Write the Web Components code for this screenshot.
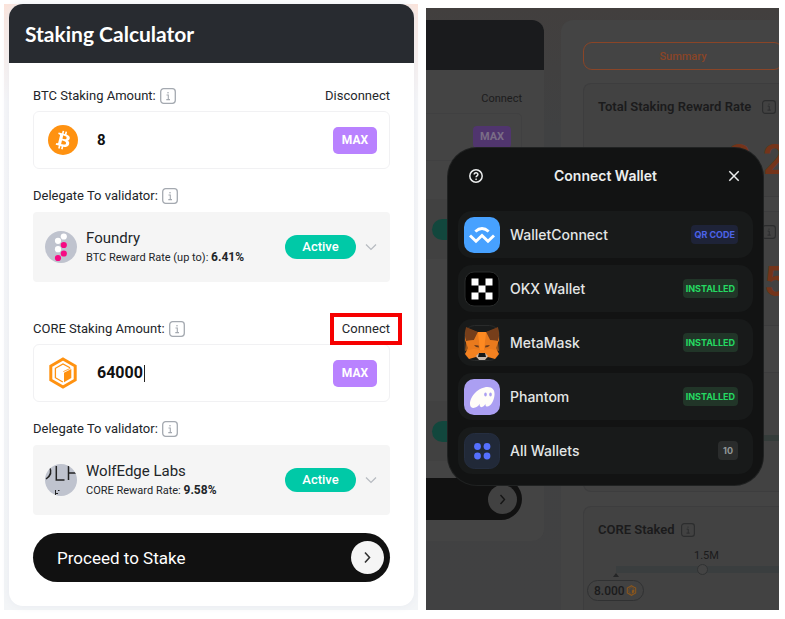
<!DOCTYPE html>
<html lang="en">
<head>
<meta charset="utf-8">
<title>Staking Calculator</title>
<style>
  body { margin: 0; background: #fff; font-family: Roboto, "Liberation Sans", sans-serif; color: #222529; }
</style>
</head>
<body>
<staking-page></staking-page>
<script>
const sheet = `*{box-sizing:border-box}button{font:inherit;border:0;padding:0;margin:0;background:none;color:inherit;cursor:pointer;text-align:left}svg{display:block}`;
const define = (name, html) => {
  customElements.define(name, class extends HTMLElement {
    connectedCallback() {
      if (this.shadowRoot) return;
      const t = document.createElement('template');
      t.innerHTML = `<style>${sheet}</style>` + html(this);
      this.attachShadow({ mode: 'open' }).append(t.content.cloneNode(true));
    }
  });
};

const bitcoin = `<svg width="30" height="30" viewBox="0 0 32 32"><circle cx="16" cy="16" r="16" fill="#ff9211"/><path fill="#fff" d="M23.2 14c.3-2.100-1.300-3.200-3.500-4l.7-2.800-1.700-.4-.7 2.700-1.400-.3.700-2.800-1.700-.4-.7 2.800-3.500-.9-.5 1.800s1.300.3 1.200.3c.7.2.8.6.8 1l-2 8c-.1.200-.3.500-.8.400l-1.200-.3-.8 1.900 3.400.9-.7 2.900 1.700.4.700-2.800 1.400.4-.7 2.800 1.700.4.7-2.900c3 .6 5.200.3 6.100-2.300.7-2.100 0-3.400-1.600-4.200 1.200-.2 2.100-1 2.400-2.600zm-4 5.600c-.5 2.100-4.100 1-5.200.7l.9-3.800c1.200.3 4.900.9 4.300 3.100zm.6-5.600c-.5 1.900-3.500.9-4.400.7l.8-3.400c1 .2 4.100.7 3.600 2.700z"/></svg>`;
const core = (s, c) => `<svg width="${s}" height="${s}" viewBox="0 0 32 32" fill="none" stroke="${c}"><path d="M16 2 28.200 9V23L16 30 3.800 23V9z" stroke-width="3"/><path d="M23 10.800 16 6.900 8.400 11.300V20.700L15.800 25" stroke-width="1.300"/><path d="M24.300 12V20.900L17 25.200V15.700z" fill="${c}" stroke="none"/><path d="M23.500 11.300 16.300 14.600" stroke-width=".8"/></svg>`;
const foundry = `<svg width="32" height="32" viewBox="0 0 32 32"><circle cx="16" cy="16" r="16" fill="#bfc3ce"/><g fill="#fff"><circle cx="18.800" cy="5.500" r="3.100"/><circle cx="13" cy="9.800" r="3.100"/><circle cx="13" cy="18.200" r="3.100"/></g><g fill="#f60a83"><circle cx="18.800" cy="14" r="3.100"/><circle cx="18.800" cy="22.500" r="3.100"/><circle cx="13" cy="27" r="3.100"/></g></svg>`;
const wolf = `<svg width="32" height="32" viewBox="0 0 32 32"><clipPath id="r"><circle cx="16" cy="16" r="16"/></clipPath><g clip-path="url(#r)"><path fill="#bfc3ce" d="M0 0h32v32H0z"/><g fill="none" stroke="#222" stroke-width="1.500"><path d="M4 2Q8.500 10 1 15M11.300 2V16H19.500M23.500 2V16M23.500 9H32"/><path d="M10.500 26V31M10.500 29.500H13M13 26.500H14.500" stroke-width="1"/></g></g></svg>`;

define('info-icon', () => `<style>:host{display:block;color:#a4a9b0}:host([small]) svg{width:14px;height:14px}</style>
<svg width="16" height="16" viewBox="0 0 16 16" fill="none" stroke="currentColor"><rect x=".7" y=".7" width="14.600" height="14.600" rx="3" stroke-width="1.300"/><path d="M6.500 7H8.300V11.600M6.300 11.600H10" stroke-width="1.100"/><circle cx="8" cy="4.700" r=".8" fill="currentColor" stroke="none"/></svg>`);

define('field-label', () => `<style>:host{display:flex;align-items:center;gap:4px;height:20px;font-size:13px;line-height:20px}
slot[name=action]{display:block;margin-left:auto}.l{white-space:nowrap}</style><span class="l"><slot></slot></span><info-icon></info-icon><slot name="action"></slot>`);

define('link-button', () => `<style>:host{display:block;margin-left:auto}button{display:block;font-size:13px;line-height:20px;color:#25282c}
:host([marked]) button{border:4px solid #f60000;padding:2px 8px;margin:0 -12px}</style><button type="button"><slot></slot></button>`);

define('amount-field', el => `<style>:host{display:flex;align-items:center;height:58px;border:1px solid #f1f1f3;border-radius:6px;padding:0 12px 0 13px;background:#fff}
.ic{width:32px;display:flex;justify-content:center}input{font:700 15px/24px Roboto,sans-serif;color:#111;border:0;outline:0;background:none;padding:0;margin-left:18px;flex:1;min-width:0;width:0}
.v{flex:1;min-width:0;display:flex;align-items:center}
.caret input{flex:none;width:47px;font-size:16px}.bar{width:1px;height:17px;background:#222}
button{height:27px;width:44px;border-radius:5px;background:#b982ff;color:#fff;font-size:12px;font-weight:700;text-align:center}</style>
<span class="ic">${el.getAttribute('coin') === 'btc' ? bitcoin : core(32, '#ff9211')}</span>
<span class="v ${el.hasAttribute('caret') ? 'caret' : ''}"><input type="text" aria-label="${el.getAttribute('label')}" value="${el.getAttribute('value')}">${el.hasAttribute('caret') ? '<span class="bar"></span>' : ''}</span>
<button type="button">MAX</button>`);

define('validator-row', el => `<style>:host{display:block}button{display:flex;width:100%;height:70px;align-items:center;padding:0 13px 0 12px;background:#f5f5f5;border-radius:4px}
.t{margin-left:9px;flex:1;min-width:0;white-space:nowrap}.n{display:block;font-size:15px;line-height:20px}.r{display:block;font-size:11px;line-height:18px}b{font-size:12px;font-weight:700}
.a{width:71px;height:24px;border-radius:12px;background:#00c9a7;color:#fff;font-size:13px;font-weight:500;line-height:24px;text-align:center;margin-right:9px}</style>
<button type="button">${el.getAttribute('icon') === 'foundry' ? foundry : wolf}<span class="t"><span class="n"><slot></slot></span><span class="r">${el.getAttribute('rate')}: <b>${el.getAttribute('value')}</b></span></span><span class="a">Active</span>
<svg width="12" height="8" viewBox="0 0 12 8" fill="none" stroke="#b6bac0" stroke-width="1.200"><path d="M1 1.500 6 6.500 11 1.500"/></svg></button>`);

define('staking-card', () => `<style>:host{display:block;background:#fff;border-radius:14px;overflow:hidden;box-shadow:0 0 8px #e8ebf0}
header{background:#282b30;height:59px;padding:0 16px;display:flex;align-items:center}h1{margin:0;color:#fff;font:700 21px/24px Lato,sans-serif}
main{padding:23px 24px 24px}amount-field{margin:5px 0 17px}validator-row{margin-top:6px}.next{margin-top:37px}
.go{display:flex;align-items:center;justify-content:space-between;width:100%;height:49px;margin-top:18px;padding:0 6px 0 24px;border-radius:25px;background:#111;color:#fff;font-size:17px}</style>
<header><h1>Staking Calculator</h1></header><main>
<field-label>BTC Staking Amount:<link-button slot="action">Disconnect</link-button></field-label>
<amount-field coin="btc" value="8" label="BTC Staking Amount"></amount-field>
<field-label>Delegate To validator:</field-label>
<validator-row icon="foundry" rate="BTC Reward Rate (up to)" value="6.41%">Foundry</validator-row>
<field-label class="next">CORE Staking Amount:<link-button slot="action" marked>Connect</link-button></field-label>
<amount-field coin="core" value="64000" caret label="CORE Staking Amount"></amount-field>
<field-label>Delegate To validator:</field-label>
<validator-row icon="wolf" rate="CORE Reward Rate" value="9.58%">WolfEdge Labs</validator-row>
<button class="go" type="button">Proceed to Stake<svg width="33" height="33" viewBox="0 0 33 33"><circle cx="16.500" cy="16.500" r="16.500" fill="#f5f5f5"/><path d="M14 11.500 18.500 16.500 14 21.500" fill="none" stroke="#333" stroke-width="1.600"/></svg></button></main>`);

define('dim-calculator', () => `<style>:host{display:block;height:521px;background:#444;border-radius:0 12px 12px 0;overflow:hidden;color:#1c1c1d;font-size:11px}
.h{height:50px;background:#1a1b1d}.b{padding:19px 22px 0 0;display:flex;flex-direction:column;align-items:flex-end}
button{line-height:20px}.f{width:100%;height:48px;margin-top:4px;border:1px solid #404041;border-left:0;border-radius:0 5px 5px 0;display:flex;align-items:center;justify-content:flex-end;padding-right:10px}
.m{width:38px;height:22px;background:#50356e;border-radius:4px;color:#7a6d86;font-weight:700;text-align:center}
.v{width:100%;height:60px;background:#414141;margin-top:38px;display:flex;align-items:center;padding-left:6px}.v i{width:60px;height:21px;border-radius:11px;background:#12473d}
.v+.v{margin-top:142px}.g{width:100%;height:42px;margin-top:17px;border-radius:0 21px 21px 0;background:#111;display:flex;justify-content:flex-end;align-items:center;padding-right:5px}</style>
<div class="h"></div><div class="b"><button type="button">Connect</button><div class="f"><button class="m" type="button">MAX</button></div><div class="v"><i></i></div><div class="v"><i></i></div>
<button class="g" type="button" aria-label="Proceed"><svg width="29" height="29" viewBox="0 0 29 29"><circle cx="14.500" cy="14.500" r="14.500" fill="#414141"/><path d="M12.500 10 16.500 14.500 12.500 19" fill="none" stroke="#151515" stroke-width="1.400"/></svg></button></div>`);

define('dim-summary', () => `<style>:host{display:block;background:#444;border-radius:12px 0 0 0;padding:22px 0 0 22px;color:#1b1b1c;white-space:nowrap;overflow:hidden}
.s{display:block;width:200px;height:28px;border:1px solid #8a4527;border-radius:9px;color:#8a4527;font-size:11px;font-weight:500;text-align:center}
section{border:1px solid #3d3d3e;border-right:0;border-radius:8px 0 0 8px;background:#424242;height:114px;padding:13px 0 0 14px;margin-top:13px}
section.two{margin-top:14px;height:115px}section.three{height:120px;margin-top:46px}
section.core{height:120px;margin-top:14px}h2{margin:0;font:600 13px/20px Roboto,sans-serif;display:flex;align-items:center;gap:6px}h2 span{width:158px}info-icon{color:#2c2d2e}
.big{font:600 42px/44px Roboto,sans-serif;color:#74341a;margin:21px 0 0 129px}.two .big{margin-left:166px}
.q{padding-left:96px;font-size:11px;line-height:14px;margin-top:9px}
.bar{height:7px;background:#3a3e3f;margin:3px 0 0 18px;display:flex;align-items:center;padding-left:81px}.bar i{width:11px;height:11px;border:1px solid #303233;border-radius:50%;background:#444}
.tri{display:block;width:0;height:0;border:3px solid transparent;border-top:0;border-bottom:4px solid #252627;margin-left:15px}
.tip{display:inline-flex;align-items:center;gap:1px;height:21px;margin:3px 0 0 -11px;border:1px solid #303132;border-radius:11px;padding:0 6px;font-size:12px;font-weight:500}
.track{height:6px;background:#343c3a;margin-top:49px;margin-left:-14px}</style>
<button class="s" type="button">Summary</button>
<section><h2><span>Total Staking Reward Rate</span><info-icon small></info-icon></h2><div class="big">8.2</div></section>
<section class="two"><h2><span></span><info-icon small></info-icon></h2><div class="big">5</div></section>
<section class="three"><div class="track"></div></section>
<section class="core"><h2>CORE Staked<info-icon small></info-icon></h2><div class="q">1.5M</div><div class="bar"><i></i></div><i class="tri"></i><div class="tip">8.000 ${core(11, '#8c571c')}</div></section>`);

const logos = {
  wc: `<rect width="36" height="36" rx="10" fill="#47a1ff"/><g fill="none" stroke="#fff" stroke-width="2.900"><path d="M11.300 14.500Q18 8.500 24.700 14.500"/><path d="M6 18.500 12 24.300 18 18.500 24 24.300 30 18.500"/></g>`,
  okx: `<rect x="1" y="1" width="34" height="34" rx="9" fill="#000" stroke="#292b2b"/><path fill="#fff" d="M7.500 7.500h7v7h-7zM21.500 7.500h7v7h-7zM14.500 14.500h7v7h-7zM7.500 21.500h7v7h-7zM21.500 21.500h7v7h-7z"/>`,
  mm: `<rect x=".5" y=".5" width="35" height="35" rx="10" fill="#191b1b" stroke="#292b2b"/><path fill="#f58220" d="M2 3 13 7H23L34 3 35 15 32 23 35 29 31 34 24 32 20 35H16L12 32 5 34 1 29 4 23 1 15z"/><path fill="#763e1a" d="M2 2 14 7 10 15 2 16 1 11zM34 2 22 7 26 15 34 16 35 11z"/><path fill="#e2761b" d="M2 16 10 15 14 7 16 25 10 24 1 26zM34 16 26 15 22 7 20 25 26 24 35 26z" opacity=".65"/><path fill="#ff8a21" d="M14 7H22L20 25H16z"/><path fill="#693b1c" d="M10 20 14.500 20.500 15 22.500 12 22zM26 20 21.500 20.500 21 22.500 24 22z"/><path fill="#c7b8ac" d="M12 31 15 28H21L24 31 21 35H15z"/><path fill="#171717" d="M15 28H21L22 32H14z"/>`,
  ph: `<rect width="36" height="36" rx="10" fill="#ab9ff2"/><path fill="#fffdf8" d="M6 25C6 17 15 8 23.500 8C28.500 8 31 11 30.500 16C30 22 26.500 28 22.800 27.500C21.500 27.300 21.300 26.300 21.500 24.800C20 27.500 18 28.800 16.500 27.800C15.500 27.200 15.500 26 16 24.800C14 27.500 12 29 9 28.900C7 28.800 6 27 6 25z"/><ellipse cx="21.500" cy="15.500" rx="1.300" ry="2" fill="#ab9ff2"/><ellipse cx="26.500" cy="15.500" rx="1.300" ry="2" fill="#ab9ff2"/>`,
  all: `<rect x=".5" y=".5" width="35" height="35" rx="10" fill="#212938" stroke="#252e40"/><g fill="#5570ff"><circle cx="13.500" cy="13.500" r="3.400"/><circle cx="23" cy="13.500" r="3.400"/><circle cx="13.500" cy="23" r="3.400"/><circle cx="23" cy="23" r="3.400"/></g>`
};
define('wallet-option', el => `<style>:host{display:block}button{display:flex;align-items:center;width:100%;height:47px;border-radius:14px;background:#181a1a;padding:0 15px 0 6px;color:#e3e6e6;font:500 14px/20px Inter,sans-serif}
.n{margin-left:10px;flex:1;white-space:nowrap}.t{font-weight:700;font-size:9px;line-height:19px;border-radius:4px;padding:0 3px;background:#213528;color:#25d962}.t.blue{background:#1e2338;color:#4c63e8}.t.gray{background:#2a2c2c;color:#929898;padding:0 5px}</style>
<button type="button"><svg width="36" height="36" viewBox="0 0 36 36">${logos[el.getAttribute('logo')]}</svg><span class="n"><slot></slot></span><span class="t ${el.getAttribute('tone') || ''}">${el.getAttribute('tag')}</span></button>`);

define('wallet-modal', () => `<style>:host{display:block;background:#121313;border-radius:29px;padding:0 10px 11px;color:#eceeee;box-shadow:0 0 0 1px #202222}
header{display:flex;align-items:center;justify-content:space-between;height:56px;padding:0 13px 0 11px}h2{margin:0;font:600 14px/20px Inter,sans-serif}
nav{display:grid;gap:7px;padding-top:7px}</style>
<header><button type="button" aria-label="Help"><svg width="14" height="14" viewBox="0 0 14 14" fill="none" stroke="currentColor" stroke-width="1.500"><circle cx="7" cy="7" r="6.200"/><path d="M5.200 5.600C5.200 3.200 8.900 3.200 8.900 5.500C8.900 6.900 7.100 6.900 7.100 8.300"/><circle cx="7.100" cy="10.200" r=".5" fill="currentColor" stroke-width=".8"/></svg></button><h2>Connect Wallet</h2>
<button type="button" aria-label="Close"><svg width="12" height="12" viewBox="0 0 12 12" fill="none" stroke="currentColor" stroke-width="1.500"><path d="M1.300 1.300 10.700 10.700M10.700 1.300 1.300 10.700"/></svg></button></header>
<nav><wallet-option logo="wc" tone="blue" tag="QR CODE">WalletConnect</wallet-option><wallet-option logo="okx" tag="INSTALLED">OKX Wallet</wallet-option><wallet-option logo="mm" tag="INSTALLED">MetaMask</wallet-option><wallet-option logo="ph" tag="INSTALLED">Phantom</wallet-option><wallet-option logo="all" tone="gray" tag="10">All Wallets</wallet-option></nav>`);

define('staking-page', () => `<style>:host{display:grid;grid-template-columns:414fr 353fr;gap:8px;padding:4px 6px 9px 4px}
.l{padding:0 4px 4px 5px;background:linear-gradient(#fbe3da,#f6f6f9 16%,#f3f5f7)}
.r{position:relative;margin-top:4px;background:linear-gradient(#423f3e,#404142 20%,#414142);overflow:hidden;display:grid;grid-template-columns:118px minmax(0,1fr);gap:17px;padding-top:12px;contain:size}
wallet-modal{position:absolute;top:140px;left:22px;right:16px}</style>
<div class="l"><staking-card></staking-card></div>
<div class="r"><dim-calculator></dim-calculator><dim-summary></dim-summary><wallet-modal></wallet-modal></div>`);
</script>
</body>
</html>
